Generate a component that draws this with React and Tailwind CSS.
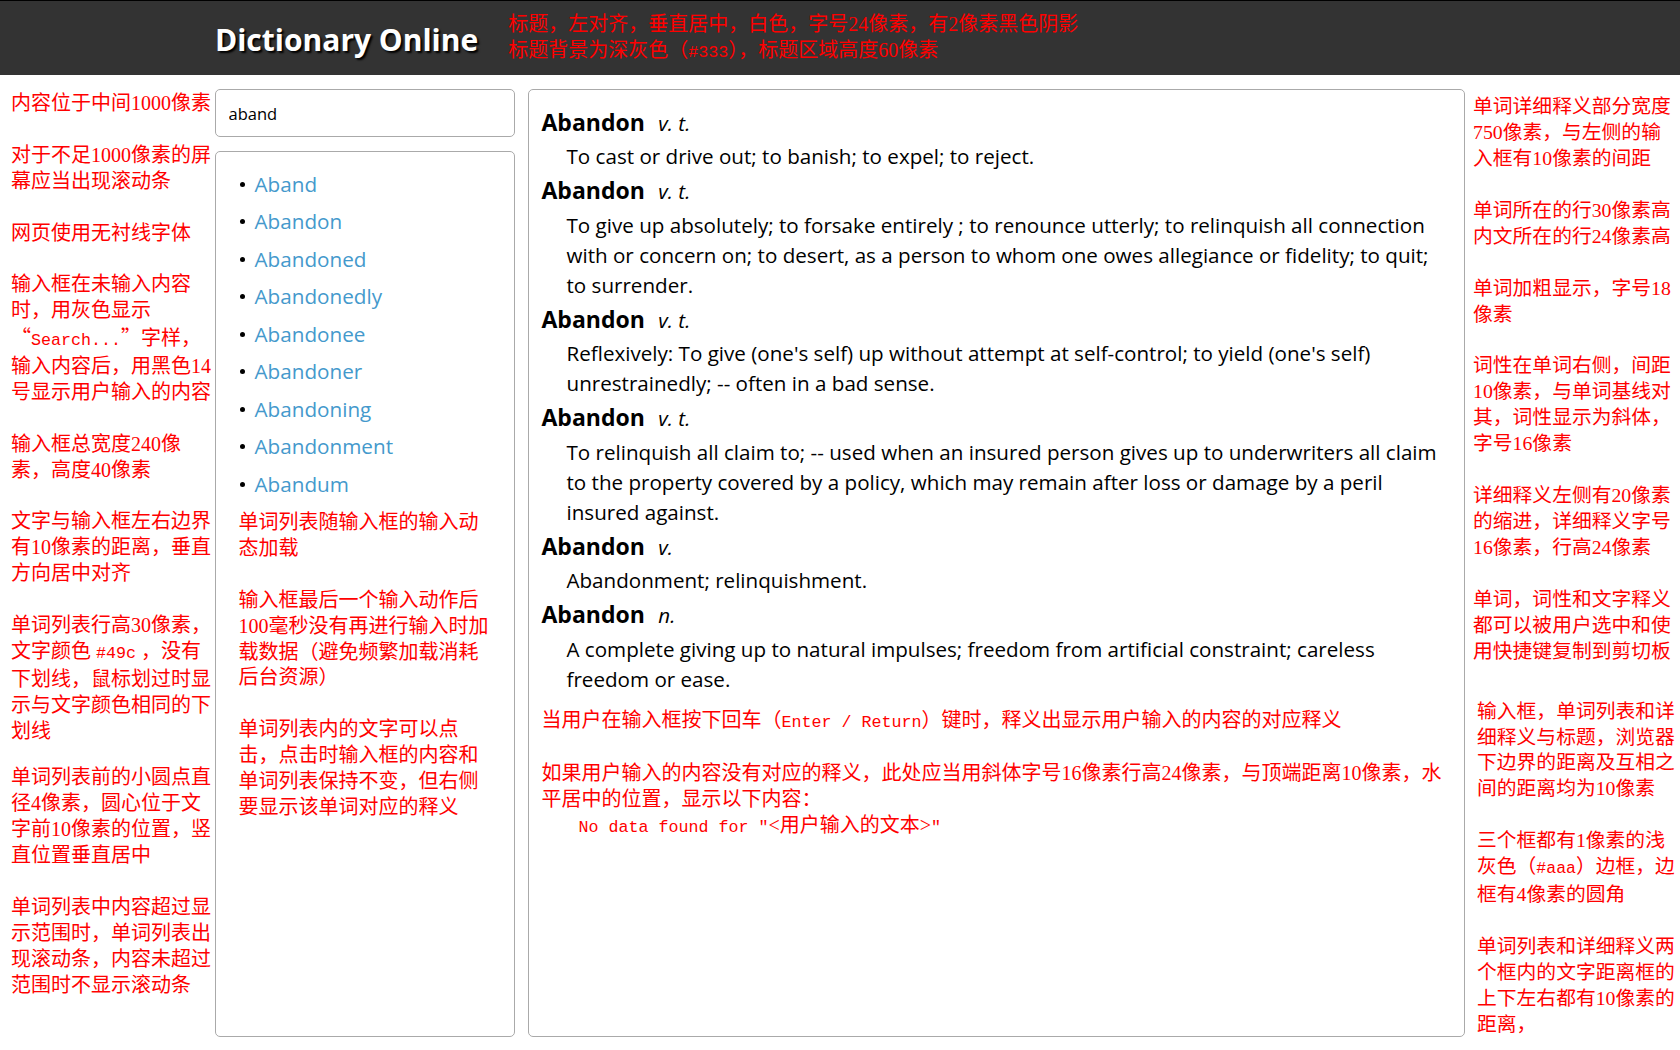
import React from "react";

const ANN = "font-['Liberation_Serif','Noto_Sans_CJK_SC',serif] text-[#ff0000] whitespace-nowrap";

function M({ children }) {
  return <span className="font-['Liberation_Mono','Noto_Sans_CJK_SC',monospace] text-[0.833em]">{children}</span>;
}

function Q({ children }) {
  return <span className="font-['Noto_Sans_CJK_SC',sans-serif]">{children}</span>;
}

function Para({ lines, className = "" }) {
  return (
    <p className={"mb-[25.9px] " + className}>
      {lines.map((l, i) => (
        <span key={i} className="block">
          {l}
        </span>
      ))}
    </p>
  );
}

const leftNotes = [
  ["内容位于中间1000像素"],
  ["对于不足1000像素的屏", "幕应当出现滚动条"],
  ["网页使用无衬线字体"],
  [
    "输入框在未输入内容",
    "时，用灰色显示",
    <>
      <Q>“</Q>
      <M>Search...</M>
      <Q>”</Q>字样，
    </>,
    "输入内容后，用黑色14",
    "号显示用户输入的内容",
  ],
  ["输入框总宽度240像", "素，高度40像素"],
  ["文字与输入框左右边界", "有10像素的距离，垂直", "方向居中对齐"],
  [
    "单词列表行高30像素，",
    <>
      文字颜色 <M>#49c</M> ，没有
    </>,
    "下划线，鼠标划过时显",
    "示与文字颜色相同的下",
    "划线",
  ],
];

const leftNotes2 = [
  ["单词列表前的小圆点直", "径4像素，圆心位于文", "字前10像素的位置，竖", "直位置垂直居中"],
  ["单词列表中内容超过显", "示范围时，单词列表出", "现滚动条，内容未超过", "范围时不显示滚动条"],
];

const middleNotes = [
  ["单词列表随输入框的输入动", "态加载"],
  ["输入框最后一个输入动作后", "100毫秒没有再进行输入时加", "载数据（避免频繁加载消耗", "后台资源）"],
  ["单词列表内的文字可以点", "击，点击时输入框的内容和", "单词列表保持不变，但右侧", "要显示该单词对应的释义"],
];

const rightNotes = [
  ["单词详细释义部分宽度", "750像素，与左侧的输", "入框有10像素的间距"],
  ["单词所在的行30像素高", "内文所在的行24像素高"],
  ["单词加粗显示，字号18", "像素"],
  ["词性在单词右侧，间距", "10像素，与单词基线对", "其，词性显示为斜体，", "字号16像素"],
  ["详细释义左侧有20像素", "的缩进，详细释义字号", "16像素，行高24像素"],
  ["单词，词性和文字释义", "都可以被用户选中和使", "用快捷键复制到剪切板"],
];

const rightNotes2 = [
  ["输入框，单词列表和详", "细释义与标题，浏览器", "下边界的距离及互相之", "间的距离均为10像素"],
  [
    "三个框都有1像素的浅",
    <>
      灰色（<M>#aaa</M>）边框，边
    </>,
    "框有4像素的圆角",
  ],
  ["单词列表和详细释义两", "个框内的文字距离框的", "上下左右都有10像素的", "距离，"],
];

const words = [
  "Aband",
  "Abandon",
  "Abandoned",
  "Abandonedly",
  "Abandonee",
  "Abandoner",
  "Abandoning",
  "Abandonment",
  "Abandum",
];

const entries = [
  { pos: "v. t.", lines: ["To cast or drive out; to banish; to expel; to reject."] },
  {
    pos: "v. t.",
    lines: [
      "To give up absolutely; to forsake entirely ; to renounce utterly; to relinquish all connection",
      "with or concern on; to desert, as a person to whom one owes allegiance or fidelity; to quit;",
      "to surrender.",
    ],
  },
  {
    pos: "v. t.",
    lines: [
      "Reflexively: To give (one's self) up without attempt at self-control; to yield (one's self)",
      "unrestrainedly; -- often in a bad sense.",
    ],
  },
  {
    pos: "v. t.",
    lines: [
      "To relinquish all claim to; -- used when an insured person gives up to underwriters all claim",
      "to the property covered by a policy, which may remain after loss or damage by a peril",
      "insured against.",
    ],
  },
  { pos: "v.", lines: ["Abandonment; relinquishment."] },
  {
    pos: "n.",
    lines: [
      "A complete giving up to natural impulses; freedom from artificial constraint; careless",
      "freedom or ease.",
    ],
  },
];

export default function App() {
  return (
    <div className="h-screen w-full flex flex-col bg-white font-['Open_Sans','Noto_Sans',sans-serif] overflow-hidden">
      <header className="h-[75px] shrink-0 bg-[#333] border-t border-black flex">
        <div className="w-[1250px] mx-auto flex items-center">
          <h1 className="text-white font-bold text-[30px] leading-none pt-[4px] [text-shadow:2px_2px_2px_#000] font-['Open_Sans',sans-serif]">
            Dictionary Online
          </h1>
          <div className={ANN + " ml-[30px] text-[20px] leading-[26px]"}>
            <div>标题，左对齐，垂直居中，白色，字号24像素，有2像素黑色阴影</div>
            <div>
              标题背景为深灰色（<M>#333</M>），标题区域高度60像素
            </div>
          </div>
        </div>
      </header>

      <div className="flex flex-1 min-h-0">
        <aside className={ANN + " w-[215px] shrink-0 pl-[11px] pt-[16px] text-[20px] leading-[25.9px]"}>
          {leftNotes.map((p, i) => (
            <Para key={i} lines={p} />
          ))}
          <div className="-mt-[5px]">
            {leftNotes2.map((p, i) => (
              <Para key={i} lines={p} />
            ))}
          </div>
        </aside>

        <main className="w-[1250px] shrink-0 flex gap-[13px] pt-[14px] pb-[13px]">
          <div className="w-[300px] shrink-0 flex flex-col gap-[14px]">
            <input
              readOnly
              value="aband"
              placeholder="Search..."
              className="h-[48px] shrink-0 w-full border border-[#aaa] rounded-[5px] px-[12.5px] text-[16.5px] text-black outline-none font-['Open_Sans',sans-serif]"
            />
            <div className="flex-1 min-h-0 border border-[#aaa] rounded-[5px] p-[12.5px] overflow-auto">
              <ul className="pt-[1px]">
                {words.map((w) => (
                  <li key={w} className="h-[37.5px] flex items-center">
                    <span className="w-[5px] h-[5px] rounded-full bg-black ml-[11px] mr-[10px] shrink-0" />
                    <a href="#" className="text-[20.7px] text-[#4499cc] no-underline hover:underline">
                      {w}
                    </a>
                  </li>
                ))}
              </ul>
              <div className={ANN + " mt-[7px] pl-[10px] text-[20px] leading-[25.9px]"}>
                {middleNotes.map((p, i) => (
                  <Para key={i} lines={p} />
                ))}
              </div>
            </div>
          </div>

          <div className="w-[937px] shrink-0 border border-[#aaa] rounded-[5px] p-[12.5px] overflow-auto">
            {entries.map((e, i) => (
              <div key={i}>
                <div className="h-[38.5px] flex items-baseline leading-[38.5px]">
                  <span className="font-bold text-[23px] text-black">Abandon</span>
                  <span className="italic text-[20.6px] ml-[13.5px] text-black">{e.pos}</span>
                </div>
                <div className="pl-[25px] text-[20.6px] leading-[30px] text-black">
                  {e.lines.map((l, j) => (
                    <span key={j} className="block whitespace-nowrap">
                      {l}
                    </span>
                  ))}
                </div>
              </div>
            ))}
            <div className={ANN + " mt-[14px] text-[20px] leading-[25.9px]"}>
              <Para
                className="mb-[24px]"
                lines={[
                  <>
                    当用户在输入框按下回车（<M>Enter / Return</M>）键时，释义出显示用户输入的内容的对应释义
                  </>,
                ]}
              />
              <p>
                <span className="block">
                  如果用户输入的内容没有对应的释义，此处应当用斜体字号16像素行高24像素，与顶端距离10像素，水
                </span>
                <span className="block">平居中的位置，显示以下内容：</span>
                <span className="block pl-[37px]">
                  <M>No data found for "</M>&lt;用户输入的文本&gt;<M>"</M>
                </span>
              </p>
            </div>
          </div>
        </main>

        <aside className={ANN + " w-[215px] shrink-0 pl-[8px] pt-[19px] text-[19.8px] leading-[25.95px]"}>
          {rightNotes.map((p, i) => (
            <Para key={i} lines={p} />
          ))}
          <div className="ml-[4px] pt-[8px]">
            {rightNotes2.map((p, i) => (
              <Para key={i} lines={p} />
            ))}
          </div>
        </aside>
      </div>
    </div>
  );
}
